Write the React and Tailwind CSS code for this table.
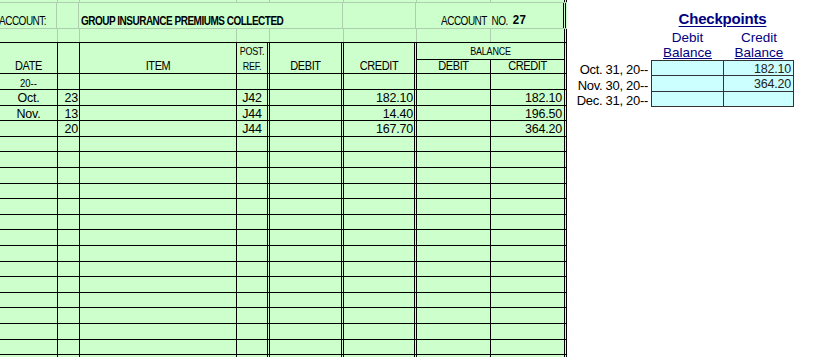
import React from 'react'

// column layout of the ledger body (widths include the right border)
const COLS = [
  'w-[58px] border-r border-black justify-center',
  'w-[22px] border-r border-black justify-end pr-[1px]',
  'w-[157px] border-r border-black justify-start',
  'w-[33px] border-r-[3px] border-double border-black justify-center',
  'w-[74px] border-r-[3px] border-double border-black justify-end pr-[1px]',
  'w-[73px] border-r-[3px] border-double border-black justify-end pr-[1px]',
  'w-[74px] border-r border-black justify-end pr-[1px]',
  'w-[76px] border-r-[3px] border-double border-black justify-end pr-[2px]',
]

// faint spreadsheet gridlines for the rows above the header
const FAINT = [
  'w-[58px] border-r border-[#aecfae]',
  'w-[22px] border-r border-[#aecfae]',
  'w-[157px] border-r border-[#aecfae]',
  'w-[33px] border-r border-[#aecfae]',
  'w-[74px] border-r border-[#aecfae]',
  'w-[73px] border-r border-[#aecfae]',
  'w-[74px] border-r border-[#aecfae]',
  'w-[76px] border-r-[3px] border-double border-black',
]

const entries = [
  ['Oct.', '23', '', 'J42', '', '182.10', '', '182.10'],
  ['Nov.', '13', '', 'J44', '', '14.40', '', '196.50'],
  ['', '20', '', 'J44', '', '167.70', '', '364.20'],
]

const checkpoints = [
  { label: 'Oct. 31, 20--', debit: '', credit: '182.10' },
  { label: 'Nov. 30, 20--', debit: '', credit: '364.20' },
  { label: 'Dec. 31, 20--', debit: '', credit: '' },
]

function BodyRow({ cells, small }) {
  return (
    <div className="flex h-[15.6px] shrink-0 border-b border-black">
      {COLS.map((c, i) => (
        <div key={i} className={`flex items-end shrink-0 leading-none ${c}`}>
          {small && i === 0 ? (
            <span className="text-[9.5px] pb-[1px] origin-bottom scale-y-[1.15]">{cells[i]}</span>
          ) : (
            <span className="text-[12.5px] tracking-[-0.2px] origin-bottom scale-y-[1.05]">{cells[i]}</span>
          )}
        </div>
      ))}
    </div>
  )
}

function FaintRow({ h, last }) {
  return (
    <div className={`flex shrink-0 border-b ${h} ${last ? 'border-black' : 'border-[#aecfae]'}`}>
      {FAINT.map((c, i) => (
        <div key={i} className={`shrink-0 ${c}`} />
      ))}
    </div>
  )
}

function Ledger() {
  const blanks = Array.from({ length: 15 }, () => ['', '', '', '', '', '', '', ''])
  return (
    <div className="w-[567px] shrink-0 h-full bg-[#ccffcc] flex flex-col overflow-hidden text-black">
      <FaintRow h="h-[3.3px]" />

      {/* Account title row */}
      <div className="flex shrink-0 h-[25.7px] border-b border-[#aecfae] text-[10px] leading-none tracking-[-0.5px]">
        <div className="w-[58px] shrink-0 border-r border-[#aecfae] flex items-end pb-[1px] -ml-[1px]">
          <span className="origin-bottom scale-y-[1.2]">ACCOUNT:</span>
        </div>
        <div className="w-[22px] shrink-0 border-r border-[#aecfae]" />
        <div className="w-[264px] shrink-0 border-r border-[#aecfae] flex items-end pb-[1px] pl-[2px] font-bold whitespace-nowrap">
          <span className="origin-bottom scale-y-[1.2]">GROUP INSURANCE PREMIUMS COLLECTED</span>
        </div>
        <div className="w-[73px] shrink-0 border-r border-[#aecfae]" />
        <div className="w-[150px] shrink-0 border-r-[3px] border-double border-black flex items-end pb-[1px] pl-[25px] whitespace-nowrap">
          <span className="origin-bottom scale-y-[1.2]">ACCOUNT&nbsp; NO.</span>
          <span className="ml-[5px] font-bold text-[11.5px] tracking-[0.3px] origin-bottom scale-y-[1.05]">27</span>
        </div>
      </div>

      <FaintRow h="h-[14.3px]" last />

      {/* Column headings */}
      <div className="flex shrink-0 h-[31.2px] border-b border-black text-[11px] leading-none tracking-[-0.4px]">
        <div className="w-[58px] shrink-0 border-r border-black flex items-end justify-center pb-[1px]">
          <span className="origin-bottom scale-y-[1.15]">DATE</span>
        </div>
        <div className="w-[22px] shrink-0 border-r border-black" />
        <div className="w-[157px] shrink-0 border-r border-black flex items-end justify-center pb-[1px]">
          <span className="origin-bottom scale-y-[1.15]">ITEM</span>
        </div>
        <div className="w-[33px] shrink-0 border-r-[3px] border-double border-black flex flex-col items-center justify-end text-[9px] tracking-[-0.3px]">
          <span className="h-[15.6px] flex items-end pb-[2px]">
            <span className="origin-bottom scale-y-[1.2]">POST.</span>
          </span>
          <span className="h-[14.6px] flex items-end pb-[1px]">
            <span className="origin-bottom scale-y-[1.2]">REF.</span>
          </span>
        </div>
        <div className="w-[74px] shrink-0 border-r-[3px] border-double border-black flex items-end justify-center pb-[1px]">
          <span className="origin-bottom scale-y-[1.15]">DEBIT</span>
        </div>
        <div className="w-[73px] shrink-0 border-r-[3px] border-double border-black flex items-end justify-center pb-[1px]">
          <span className="origin-bottom scale-y-[1.15]">CREDIT</span>
        </div>
        <div className="w-[150px] shrink-0 border-r-[3px] border-double border-black flex flex-col">
          <div className="h-[16.3px] border-b border-black flex items-end justify-center pb-[2px] text-[9px] tracking-[-0.2px]">
            <span className="origin-bottom scale-y-[1.15]">BALANCE</span>
          </div>
          <div className="flex flex-1">
            <div className="w-[74px] shrink-0 border-r border-black flex items-end justify-center pb-[1px]">
              <span className="origin-bottom scale-y-[1.15]">DEBIT</span>
            </div>
            <div className="flex-1 flex items-end justify-center pb-[1px]">
              <span className="origin-bottom scale-y-[1.15]">CREDIT</span>
            </div>
          </div>
        </div>
      </div>

      <BodyRow cells={['20--', '', '', '', '', '', '', '']} small />
      {entries.map((r, i) => (
        <BodyRow key={i} cells={r} />
      ))}
      {blanks.map((r, i) => (
        <BodyRow key={`b${i}`} cells={r} />
      ))}
    </div>
  )
}

function Checkpoints() {
  return (
    <div className="flex-1 bg-white pt-[11px]">
      <div className="flex">
        <div className="w-[84px] shrink-0" />
        <div className="w-[143px] shrink-0 text-center text-[15px] leading-[15px] font-bold text-[#000080] underline underline-offset-[2px] tracking-[-0.2px]">
          Checkpoints
        </div>
      </div>
      <div className="flex mt-[3.5px] text-[13.5px] leading-[15px] text-[#000080]">
        <div className="w-[84px] shrink-0" />
        <div className="w-[73px] shrink-0 flex flex-col items-center">
          <span>Debit</span>
          <span className="underline underline-offset-[1px]">Balance</span>
        </div>
        <div className="w-[70px] shrink-0 flex flex-col items-center">
          <span>Credit</span>
          <span className="underline underline-offset-[1px]">Balance</span>
        </div>
      </div>
      <div className="flex mt-[0.5px]">
        <div className="w-[84px] shrink-0 flex flex-col pt-[1px] text-[13px] leading-none tracking-[-0.3px]">
          {checkpoints.map(c => (
            <div key={c.label} className="h-[15.3px] flex items-end justify-end pr-[3px] whitespace-nowrap">
              {c.label}
            </div>
          ))}
        </div>
        <div className="w-[143px] shrink-0 border-l border-t border-[#333] bg-[#ccffff] flex flex-col text-[12.5px] leading-none tracking-[-0.2px] text-[#222]">
          {checkpoints.map(c => (
            <div key={c.label} className="flex h-[15.3px]">
              <div className="w-[72px] shrink-0 border-r border-b border-[#333] flex items-end justify-end pr-[2px]">{c.debit}</div>
              <div className="w-[70px] shrink-0 border-r border-b border-[#333] flex items-end justify-end pr-[2px]">{c.credit}</div>
            </div>
          ))}
        </div>
      </div>
    </div>
  )
}

export default function App() {
  return (
    <div className="w-[828px] h-[357px] flex overflow-hidden bg-white font-['Liberation_Sans',Arial,sans-serif]">
      <Ledger />
      <Checkpoints />
    </div>
  )
}
